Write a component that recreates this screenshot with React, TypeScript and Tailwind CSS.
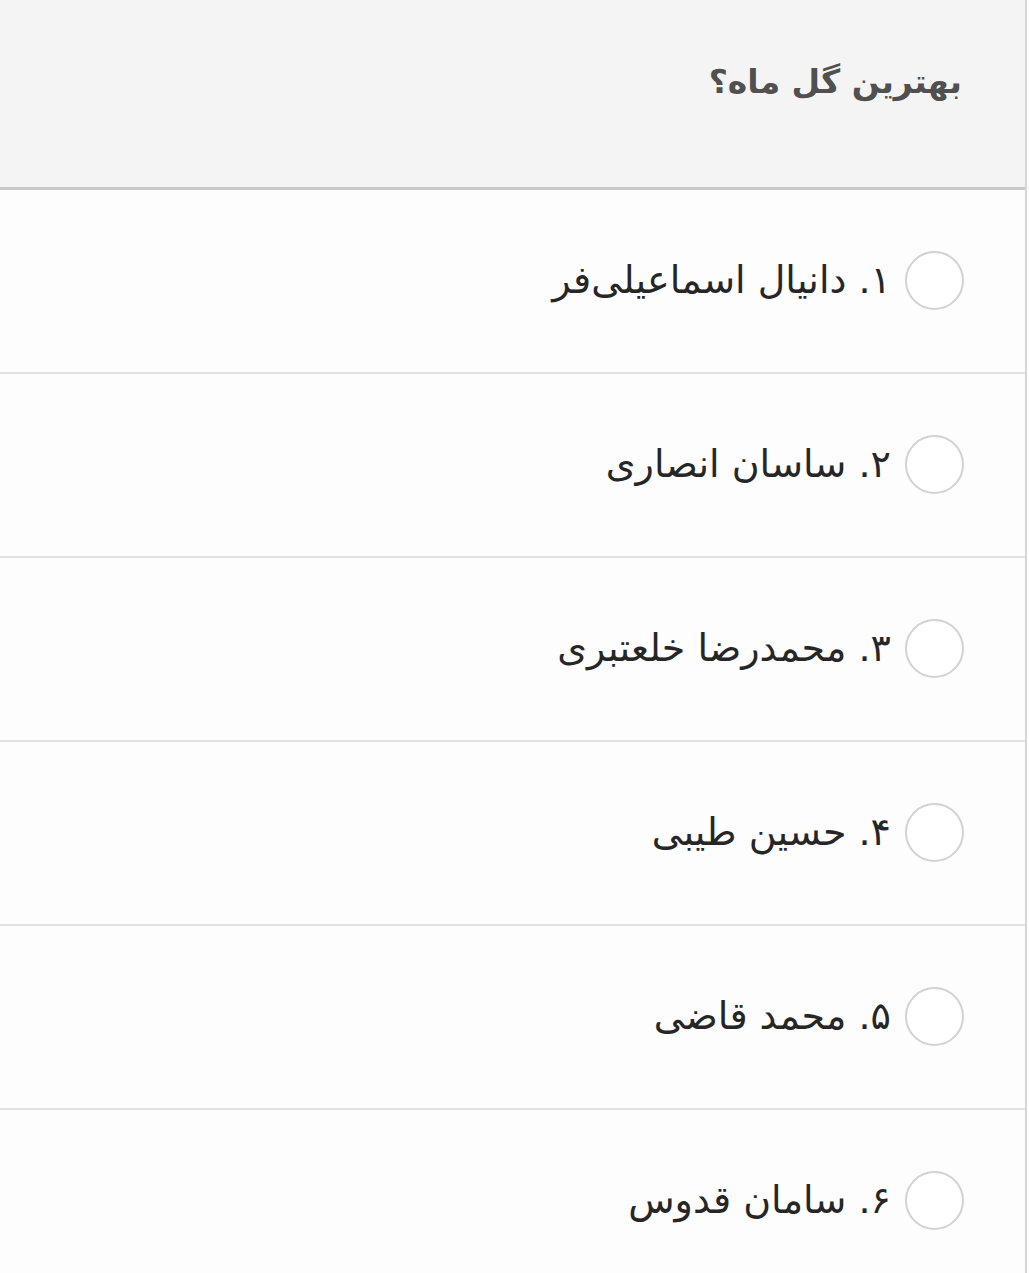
import React from "react";

const items = [
  "۱. دانیال اسماعیلی‌فر",
  "۲. ساسان انصاری",
  "۳. محمدرضا خلعتبری",
  "۴. حسین طیبی",
  "۵. محمد قاضی",
  "۶. سامان قدوس",
];

export default function App() {
  return (
    <div className="w-[1029px] h-[1273px] overflow-hidden bg-white" style={{ fontFamily: '"DejaVu Sans", "Noto Sans", sans-serif' }}>
      <div dir="rtl" className="w-[1027px] border-r-2 border-[#d6d6d6] bg-[#fdfdfd]">
        <div className="h-[190px] bg-[#f4f4f4] border-b-[3px] border-[#c9c9c9] flex items-start pr-[63px] pt-[56px]">
          <h1 className="text-[33px] font-bold text-[#505050] leading-[52px]">بهترین گل ماه؟</h1>
        </div>
        {items.map((t) => (
          <div key={t} className="h-[184px] border-b-2 border-[#e2e2e2] flex items-center pr-[61px] pb-[2px]">
            <div className="w-[59px] h-[59px] rounded-full border-2 border-[#d2d2d2] bg-white shrink-0" />
            <span className="mr-[14px] text-[38px] text-[#262626] leading-[52px]">{t}</span>
          </div>
        ))}
      </div>
    </div>
  );
}
